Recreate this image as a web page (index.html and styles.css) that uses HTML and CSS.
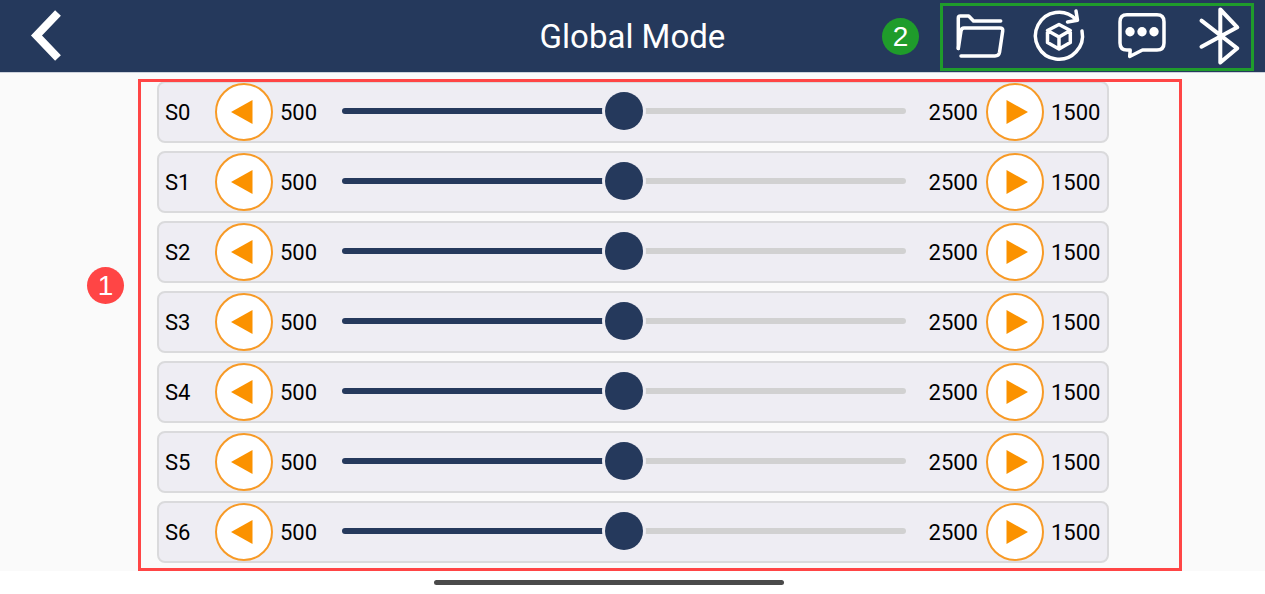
FILE: index.html
```html
<!DOCTYPE html>
<html lang="en">
<head>
<meta charset="utf-8">
<meta name="viewport" content="width=device-width, initial-scale=1">
<title>Global Mode</title>
<link rel="stylesheet" href="styles.css">
</head>
<body>
<header class="topbar">
  <button class="icon-button back" type="button" aria-label="Back">
    <svg width="40" height="56" viewBox="0 0 40 56" fill="none" stroke="#fff" stroke-width="8"><path d="M33 5L11.500 27.500 33 50"/></svg>
  </button>
  <h1 class="title">Global Mode</h1>
  <div class="tools">
    <span class="badge badge-green">2</span>
    <nav class="toolbar" aria-label="Actions">
      <button class="icon-button" type="button" aria-label="Files">
        <svg class="icon" viewBox="0 0 77 62"><path d="M15.300 42.500V12Q15.300 10 17.300 10H25.700L30.500 15H57.700"/><path d="M15.300 42.500L18 25Q18.500 22 21 22H57Q60.200 22 59.700 25L56.500 46.500Q55.800 50 52 50H18"/></svg>
      </button>
      <button class="icon-button" type="button" aria-label="Reset">
        <svg class="icon" viewBox="0 0 77 62"><path d="M62 25A23.500 23.500 0 1 1 56 13.500"/><path d="M56 5L57.500 14.300 47.500 16"/><path d="M39 18.500L50.300 24.500V36.500L39 43 27.500 36.500V24.500ZM27.500 24.500L39 31 50.300 24.500M39 31V43"/></svg>
      </button>
      <button class="icon-button" type="button" aria-label="Messages">
        <svg class="icon" viewBox="0 0 77 62"><path d="M30 8.700H60Q67 8.700 67 15.700V37Q67 44 60 44H45.500L32.700 50.500 33.200 44H30Q23 44 23 37V15.700Q23 8.700 30 8.700Z"/><g fill="#fff" stroke="none"><circle cx="33" cy="25.700" r="4.700"/><circle cx="45" cy="25.700" r="4.700"/><circle cx="57" cy="25.700" r="4.700"/></g></svg>
      </button>
      <button class="icon-button" type="button" aria-label="Bluetooth">
        <svg class="icon icon-bluetooth" viewBox="0 0 77 62"><path d="M27.500 14.700L63.300 42.300 46.300 56.500V3.500L63.300 21.300 27.500 40.700"/></svg>
      </button>
    </nav>
  </div>
</header>

<main class="main">
  <div class="gutter"><span class="badge badge-red">1</span></div>
  <section class="panel" aria-label="Servo positions">
    <ul class="servos" id="servos"></ul>
  </section>
</main>

<footer class="system-bar"><span class="home-indicator"></span></footer>

<template id="servo-template">
  <li class="servo">
    <label class="servo-name"></label>
    <button class="step" type="button" aria-label="Decrease"><svg width="22" height="24" viewBox="0 0 22 24"><path d="M0 12L21.500 0V24Z"/></svg></button>
    <span class="min">500</span>
    <input class="slider" type="range" min="500" max="2500" value="1500">
    <span class="max">2500</span>
    <button class="step step-up" type="button" aria-label="Increase"><svg width="22" height="24" viewBox="0 0 22 24"><path d="M22 12L.5 0V24Z"/></svg></button>
    <output class="value">1500</output>
  </li>
</template>
<script src="script.js"></script>
</body>
</html>
```

FILE: styles.css
```css
* {
  box-sizing: border-box;
}

body {
  margin: 0;
  min-height: 100vh;
  display: flex;
  flex-direction: column;
  background: #fff;
  color: #000;
  font-family: Roboto, "Noto Sans", sans-serif;
  font-size: 22px;
}

button {
  padding: 0;
  font: inherit;
  cursor: pointer;
}

.topbar {
  display: grid;
  grid-template-columns: 1fr auto 1fr;
  align-items: center;
  height: 73px;
  padding: 0 11px 0 25px;
  background: #25395c;
  border-bottom: 1px solid #cdd2dc;
}

.icon-button {
  display: block;
  border: 0;
  background: none;
}

.back {
  justify-self: start;
}

.back svg,
.icon,
.step svg {
  display: block;
}

.title {
  margin: 2px 14px 0 0;
  color: #fff;
  font-size: 33px;
  font-weight: 400;
  line-height: 40px;
}

.tools {
  display: flex;
  align-items: center;
  justify-content: flex-end;
  gap: 21px;
}

.toolbar {
  display: flex;
  margin-top: 2px;
  border: 3px solid #1f9c2b;
}

.icon {
  width: 77px;
  height: 62px;
  fill: none;
  stroke: #fff;
  stroke-width: 3.5;
  stroke-linecap: round;
  stroke-linejoin: round;
}

.icon-bluetooth {
  stroke-width: 4;
}

.badge {
  width: 37px;
  height: 37px;
  border-radius: 50%;
  color: #fff;
  font-family: "Liberation Sans", Arial, sans-serif;
  font-size: 28px;
  line-height: 37px;
  text-align: center;
}

.badge-green {
  background: #1f9c2b;
}

.badge-red {
  background: #ff4545;
}

.main {
  display: flex;
  padding: 6px 83px 0 0;
  background: #fafafa;
}

.gutter {
  display: flex;
  justify-content: flex-end;
  align-items: center;
  width: 138px;
  padding: 0 14px 80px 0;
}

.panel {
  position: relative;
  flex: 1;
  padding: 2px 73px 8px 19px;
}

.panel::after {
  content: "";
  position: absolute;
  inset: 0;
  border: 3px solid #ff4545;
  pointer-events: none;
}

.servos {
  display: grid;
  gap: 8px;
  margin: 0;
  padding: 0;
  list-style: none;
}

.servo {
  display: grid;
  grid-template-columns: 50px 58px 69px 1fr 80px 58px 63px;
  align-items: center;
  height: 62px;
  padding-left: 6px;
  border: 2px solid #dadadc;
  border-radius: 8px;
  background: #eeedf3;
}

.step {
  display: flex;
  align-items: center;
  justify-content: center;
  width: 58px;
  height: 58px;
  padding: 0 5px 0 0;
  border: 2px solid #f79a26;
  border-radius: 50%;
  background: #fff;
  fill: #fb9200;
}

.step-up {
  padding: 0 0 0 4px;
}

.min {
  padding-left: 7px;
}

.max {
  padding-right: 8px;
  text-align: right;
}

.value {
  padding-left: 7px;
}

.slider {
  appearance: none;
  width: 100%;
  height: 44px;
  margin: 0 0 2px;
  background: none;
}

.slider::-webkit-slider-runnable-track {
  height: 6px;
  border-radius: 3px;
  background: linear-gradient(to right, #25395c var(--fill), #d1d1d1 var(--fill));
}

.slider::-webkit-slider-thumb {
  appearance: none;
  width: 38px;
  height: 38px;
  margin-top: -16px;
  border-radius: 50%;
  background: #25395c;
  box-shadow: 0 0 0 3px #eeedf3;
}

.system-bar {
  display: flex;
  justify-content: center;
  padding: 9px 48px 8px 0;
}

.home-indicator {
  width: 350px;
  height: 5px;
  border-radius: 3px;
  background: #4a4a4a;
}
```

FILE: script.js
```js
const list = document.getElementById("servos");
const template = document.getElementById("servo-template");

for (let i = 0; i < 7; i++) {
  const row = template.content.cloneNode(true);
  const label = row.querySelector(".servo-name");
  const slider = row.querySelector(".slider");
  const value = row.querySelector(".value");
  const [down, up] = row.querySelectorAll(".step");

  label.textContent = "S" + i;
  slider.id = "servo-" + i;
  label.htmlFor = slider.id;

  const update = () => {
    const share = (slider.value - slider.min) / (slider.max - slider.min);
    slider.style.setProperty("--fill", share * 100 + "%");
    value.textContent = slider.value;
  };

  slider.addEventListener("input", update);
  down.addEventListener("click", () => { slider.stepDown(10); update(); });
  up.addEventListener("click", () => { slider.stepUp(10); update(); });
  update();
  list.append(row);
}
```
